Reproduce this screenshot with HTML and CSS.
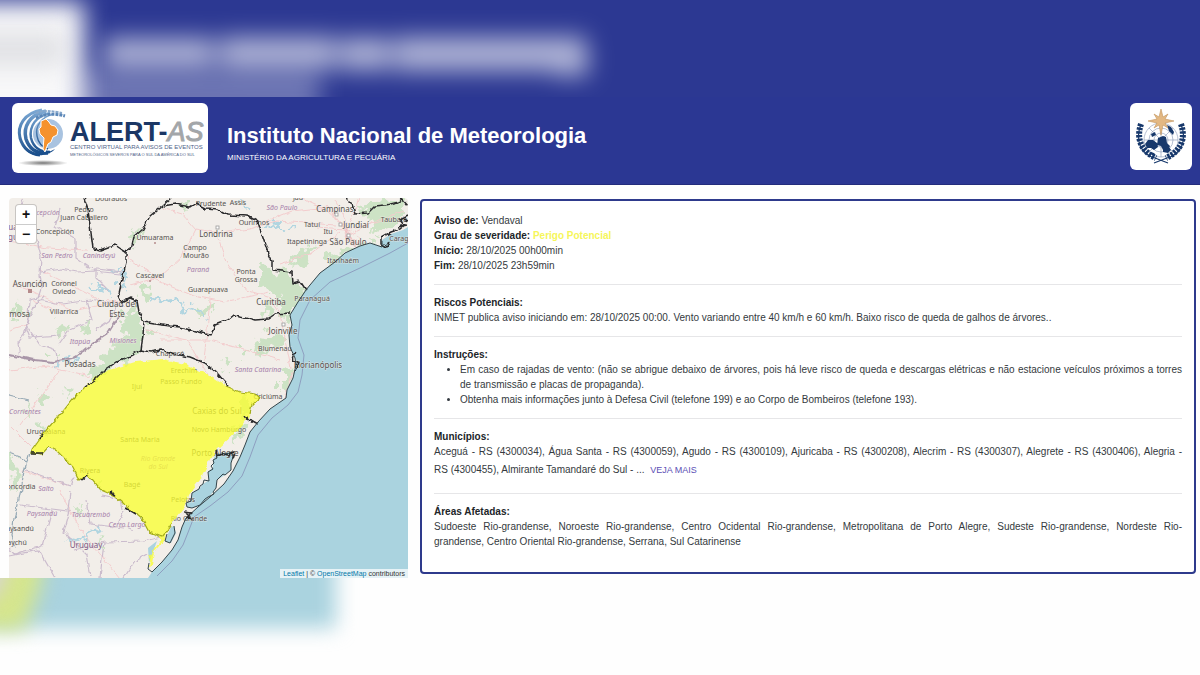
FILE: index.html
```html
<!DOCTYPE html>
<html lang="pt-BR">
<head>
<meta charset="utf-8">
<meta name="viewport" content="width=device-width, initial-scale=1">
<title>Alert-AS - Instituto Nacional de Meteorologia</title>
<link rel="stylesheet" href="styles.css">
</head>
<body>
<svg class="haze haze-top" viewBox="0 0 1200 97" preserveAspectRatio="xMinYMin slice" aria-hidden="true">
  <defs>
    <filter id="soft" x="-50%" y="-150%" width="200%" height="400%" color-interpolation-filters="sRGB"><feGaussianBlur stdDeviation="12"/></filter>
  </defs>
  <rect x="70" y="70" width="250" height="60" fill="#fff" opacity=".3" filter="url(#soft)"/>
  <g fill="#fff" opacity=".62" filter="url(#soft)">
    <rect x="104" y="38" width="110" height="30"/>
    <rect x="220" y="37" width="116" height="32"/>
    <rect x="340" y="38" width="50" height="32"/>
    <rect x="394" y="37" width="192" height="34"/>
    <rect x="554" y="50" width="34" height="26"/>
  </g>
  <rect x="-60" y="2" width="144" height="160" fill="#f8f8f9" filter="url(#soft)"/>
  <rect x="-40" y="32" width="105" height="34" fill="#c9cbd1" opacity=".5" filter="url(#soft)"/>
</svg>

<header class="header">
  <div class="logo logo-alert">
    <svg viewBox="12 103 196 70" role="img" aria-label="Alert-AS">
      <defs>
        <radialGradient id="shade"><stop offset="0" stop-color="#777"/><stop offset="1" stop-color="#fff"/></radialGradient>
        <linearGradient id="swirl" x1="0" y1="0" x2="0" y2="1"><stop offset="0" stop-color="#7ba8d4"/><stop offset="1" stop-color="#1b4f8c"/></linearGradient>
      </defs>
      <ellipse cx="43" cy="163" rx="25" ry="3" fill="url(#shade)"/>
      <circle cx="48" cy="134" r="15" fill="#a9c3e0"/>
      <g fill="none" stroke="url(#swirl)">
        <path d="M42 110c-18 3-25 16-22 28 3 10 10 16 20 17" stroke-width="3"/>
        <path d="M46 111c-17 4-23 16-20 28 3 9 10 15 22 14" stroke-width="3.500"/>
        <path d="M50 113c-14 3-21 13-19 25 2 8 8 14 19 14" stroke-width="2.500"/>
        <path d="M54 114c-13 3-19 12-17 22 1 6 5 11 11 13" stroke-width="1.500"/>
      </g>
      <path d="M24 148c7 8 18 8 31 1-5 6-22 11-31-1z" fill="#1b4f8c"/>
      <path d="M36 113c8-3 16-2 26 0" fill="none" stroke="#86a7cb" stroke-width="2" stroke-dasharray="3 1"/>
      <path d="M36 118c8-4 18-5 29-2" fill="none" stroke="#5b87b8" stroke-width="3" stroke-dasharray="3 1"/>
      <path d="M41 121l5-2 3 3 2 3 4 1 3 4-1 5-4 2-2 5-3 2-2 5-1 3-2-3 1-11-4-4-1-5 2-2z" fill="#f5922d" stroke="#fff" stroke-width="1"/>
      <text x="70" y="141" class="logo-name">ALERT-<tspan class="logo-suffix">AS</tspan></text>
      <text x="70" y="149" class="logo-line logo-line-a">CENTRO VIRTUAL PARA AVISOS DE EVENTOS</text>
      <text x="70" y="156" class="logo-line logo-line-b">METEOROLÓGICOS SEVEROS PARA O SUL DA AMÉRICA DO SUL</text>
    </svg>
  </div>
  <div class="titles">
    <h1>Instituto Nacional de Meteorologia</h1>
    <p>MINISTÉRIO DA AGRICULTURA E PECUÁRIA</p>
  </div>
  <div class="logo logo-wmo">
    <svg viewBox="1130 103 62 67" role="img" aria-label="Organização Meteorológica Mundial">
      <g fill="none" stroke="#8496b3" stroke-width=".6">
        <circle cx="1161" cy="140" r="17"/><circle cx="1161" cy="140" r="12"/><circle cx="1161" cy="140" r="7"/>
        <path d="M1144 140h34M1161 123v34M1149 128l24 24M1173 128l-24 24"/>
      </g>
      <g fill="#17386b">
        <path d="M1145 144l3-4 5 0 4 3 1 4-4 3-3-2-4 0zM1158 138l5-2 3 1 1 6 3 3-2 5-5-1-2-4-4-1zM1163 149l6-2 2 3-3 3-5-1zM1167 125l4 2 3 5-1 3-4-4zM1151 134l4-2 1 3-4 2zM1150 152l4 1 1 2-3 0z"/>
      </g>
      <g fill="none" stroke="#17386b" stroke-width="1.200">
        <path d="M1141 124c-6 16-1 30 14 34l13 5M1181 124c6 16 1 30-14 34l-13 5"/>
      </g>
      <g fill="none" stroke="#17386b" stroke-width="6" stroke-dasharray="2.500 1.200">
        <path d="M1141 124c-5 15 0 27 15 34M1181 124c5 15 0 27-15 34"/>
      </g>
      <path d="M1161 109l2 8 5-3-3 5 9 2-9 2 3 5-5-3-2 10-2-10-5 3 3-5-9-2 9-2-3-5 5 3z" fill="#e3b883" stroke="#c1935c" stroke-width=".6"/>
    </svg>
  </div>
</header>

<main class="content">
  <section class="map" aria-label="Mapa da área do aviso">
    <svg class="map-tiles" viewBox="9 198 399 380" preserveAspectRatio="xMidYMid slice" aria-hidden="true">
      <defs>
        <filter id="jag" x="-5%" y="-5%" width="110%" height="110%" color-interpolation-filters="sRGB"><feTurbulence type="fractalNoise" baseFrequency=".15" numOctaves="2" seed="4"/><feDisplacementMap in="SourceGraphic" scale="5" xChannelSelector="R" yChannelSelector="G"/></filter>
        <filter id="blot" x="-20%" y="-20%" width="140%" height="140%" color-interpolation-filters="sRGB"><feTurbulence type="fractalNoise" baseFrequency=".1" numOctaves="3" seed="9"/><feDisplacementMap in="SourceGraphic" scale="24" xChannelSelector="R" yChannelSelector="G"/><feGaussianBlur stdDeviation=".6"/></filter>
      </defs>
      <rect x="9" y="198" width="399" height="380" fill="#f2eee9"/>
      <g fill="#c0dfb8" opacity=".75" filter="url(#blot)">
        <path d="M120 312l14-4 10 14 0 30-30 14-22 16-4-8 18-22 18-18z"/>
        <path d="M262 268l22 2 10 12 12 10-14 22-4 10-10-26-16-10z"/>
        <path d="M286 262l22-16 10 2-18 16zM330 256l38-16 12 2-26 10-26 16z"/>
        <path d="M356 206l20-2 26-4 4 12-20 16-14 6 2-10z"/>
        <path d="M140 292l8-6 2 14-8 6zM262 336l14-8 8 12-10 8-16 6zM282 370l12-2-2 18-10 6z"/>
        <path d="M56 326l10-4 2 10-10 5zM84 325l6-2 0 8-7 2zM46 352l10-1-2 5-8 0zM11 300l12 2 8 14-18 4zM9 455l8 2 1 30-8 6z"/>
        <path d="M128 236l8-10 4 4-7 16zM40 390l8 5-3 10-8-4zM66 385l8 4-5 8zM243 398l10 5-6 16-5-5zM232 432l8-8 2 6-6 12z"/>
        <path d="M184 200l8 0-2 6-8 2zM208 302l3 8-10 10-6-6zM76 506l6 4-4 8zM98 536l6 2-2 8zM150 330l7 2-4 5zM240 350l16 0-12 7zM220 360l16 4-12 5z"/>
        <path d="M25 405l6 3-4 9zM44 424l4 1-4 14-4-3zM96 480l9 5-3 6zM268 300l8 2-4 18-6-4z"/>
      </g>
      <g fill="none" stroke="#b1d5e0" stroke-width="3" filter="url(#blot)">
        <path d="M88 287l16 2 6 5M55 365l24-6M66 541l20-5 16-8M150 297l20 4 24 8 14 10M266 224l26 5M236 200l14 10M110 270l14-4M126 270l-4 14"/>
      </g>
      <g fill="none" stroke="#f3cccd" stroke-width="1" filter="url(#jag)">
        <path d="M9 240l38 8 40 2M40 270l60 30 20 2M14 285l18 6 40 20 50-10M130 285l30-8 22-20 14-28 24 4 30-4 26-8 60 4M150 278l44 18 30 6 45-10M196 230l-14-16-20-6M216 232l10 30 20 28 26 8M262 223l30-12 36-4 14 20 10 12M300 198l26 12 22 20M335 200l12 24 0 16M316 228l30 2 50-12M270 300l10 14 6 30 5 24M146 330l40 10 26 40M160 340l50 0 70 20M9 370l40-4 40 10M60 370l-40 55M9 425l22 22 M20 470l50 16M60 490l20 40 40 48M210 300l-6 60M326 205l24 30 26-14 28-10M340 232l-30 22-30 10M262 430l20-25 12-35M360 198l-14 32M52 310l-20-10M126 256l28 20 8 2M9 330l20-6"/>
      </g>
      <path d="M340 234l8-4 6 4 5 6-8 4-8-2z" fill="#eeb9bb" opacity=".6" filter="url(#blot)"/>
      <g fill="none" stroke="#cbbccd" stroke-width="1.200" filter="url(#jag)">
        <path d="M22 198l5 20 10 22 4 16-1 20 2 10-4 12-9 2-1 20-4 15-6 8 2 16M41 272l20-3 16 3 18-1 26 3M60 208l-5 18 20 12 0 20 14 10 34 4M38 300l24 4 28-4 36 6M60 335l-30 2-4-10 8-20 10-10M96 268l0 10 12 12M26 325l14 20 16 6 2 14M86 300l6 20-24 10-10 14M96 330l14-10 6-14"/>
        <path d="M9 355l25 5 20 2 18-4 12-7 12-10 12-8 10-16" stroke="#a996a8" stroke-width="2"/>
        <path d="M9 395l20 5M9 452l10 4 8 8M30 452l-6 20-2 12-4 20-4 14-2 18 4 12" stroke="#96a9b5"/>
        <path d="M26 470l44 16 4-10M20 505l32 4 16 2 2-20M70 510l-6 22 22 22 4 24M52 510l-10 36-28 8-5-6M86 500l4 24 34 4M74 550l30-8 40-1 18-4M104 542l-4 36M124 510l-6 14 16 6M9 556l30-6 16 28M124 578l10-16 14-8M102 495l18 4 2 10"/>
      </g>

      <path d="M408 227L403 230 391 234 382 240 382 247 370 243 360 246 345 253 335 262 320 273 310 285 306 290 298 302 290 315 292 325 289 335 290 347 295 358 296 365 293 378 287 390 286 398 270 409 258 422 250 432 245 445 240 457 233 471 224 484 210 497 198 507 186 518 182 527 178 540 172 550 162 562 152 572 148 578 408 578Z" fill="#aad3df"/>
      <path d="M408 243L390 253 360 268 330 282 310 300 300 320 298 338 304 355 302 375 298 392 288 405 272 418 258 435 250 457 242 476 228 492 210 506 194 517 189 530 183 545 172 561 157 576" fill="none" stroke="#8e9fc0" stroke-width="1"/>
      <path id="lagoon" d="M215 455L222 453 232 452 233 457 231 463 231 470 225 475 217 480 216 488 213 492 208 498 200 505 192 508 187 507 186 503 192 500 192 493 199 489 203 484 209 480 208 472 213 467 213 461Z" fill="#aad3df"/>
      <path d="M165 541l6-14 3-1 2 7-5 10-5-1zM148 548l9-7-8 22z" fill="#aad3df"/>

      <g class="places">
        <text x="111" y="201">Dourados</text><text x="84" y="212">Pedro</text><text x="84" y="220">Juan Caballero</text><text x="55" y="234">Concepción</text>
        <text x="155" y="240">Umuarama</text><text x="195" y="250">Campo</text><text x="196" y="258">Mourão</text><text x="150" y="278">Cascavel</text>
        <text x="64" y="286">Coronel</text><text x="64" y="294">Oviedo</text><text x="64" y="314">Villarrica</text><text x="208" y="292">Guarapuava</text>
        <text x="211" y="206">Prudente</text><text x="238" y="205">Assis</text><text x="254" y="225">Ourinhos</text><text x="246" y="274">Ponta</text><text x="246" y="282">Grossa</text>
        <text x="312" y="227">Tatuí</text><text x="328" y="234">Itu</text><text x="307" y="244">Itapetininga</text><text x="343" y="263">Itanhaém</text><text x="394" y="222">Taubaté</text><text x="403" y="241">Caraguá</text>
        <text x="312" y="301">Paranaguá</text><text x="275" y="351">Blumenau</text><text x="268" y="399">Criciúma</text><text x="21" y="489">oncordia</text>
        <text x="20" y="531">aysandú</text><text x="17" y="545">aychú</text><text x="189" y="521">Rio Grande</text><text x="298" y="200">Jaú</text><text x="184" y="373">Erechim</text><text x="181" y="384">Passo Fundo</text><text x="137" y="389">Ijuí</text><text x="170" y="356">Chapecó</text>
        <text x="46" y="434">Uruguaiana</text><text x="140" y="442">Santa Maria</text><text x="132" y="487">Bagé</text><text x="183" y="502">Pelotas</text><text x="219" y="432">Novo Hamburgo</text><text x="90" y="473">Rivera</text>
      </g>
      <g class="places places-big">
        <text x="30" y="287">Asunción</text><text x="117" y="307">Ciudad del</text><text x="117" y="317">Este</text><text x="80" y="367">Posadas</text><text x="18" y="317">rmosa</text><text x="216" y="237">Londrina</text>
        <text x="335" y="212">Campinas</text><text x="356" y="228">Jundiaí</text><text x="348" y="245">São Paulo</text><text x="271" y="305">Curitiba</text><text x="283" y="334">Joinville</text><text x="318" y="368">Florianópolis</text>
        <text x="217" y="414">Caxias do Sul</text><text x="215" y="456">Porto Alegre</text>
      </g>
      <g class="places regions">
        <text x="42" y="215">Concepción</text><text x="57" y="258">San Pedro</text><text x="99" y="258">Canindeyú</text><text x="198" y="272">Paraná</text><text x="80" y="344">Itapúa</text><text x="123" y="343">Misiones</text>
        <text x="282" y="210">São Paulo</text><text x="258" y="372">Santa Catarina</text><text x="25" y="414">Corrientes</text><text x="46" y="491">Salto</text><text x="42" y="516">Paysandú</text><text x="91" y="517">Tacuarembó</text><text x="127" y="527">Cerro Largo</text>
        <text x="158" y="461">Rio Grande</text><text x="158" y="469">do Sul</text>
      </g>
      <g class="places country"><text x="86" y="548">Uruguay</text><text x="13" y="230">ua</text><text x="13" y="240">gu</text></g>
      <g fill="#b58b8b"><rect x="28" y="289" width="4" height="4"/><circle cx="155" cy="243" r="1"/><circle cx="150" cy="281" r="1"/></g>
      <g fill="#fff" stroke="#999" stroke-width=".8"><rect x="216" y="226" width="3" height="3"/><rect x="335" y="213" width="3" height="3"/><rect x="339" y="223" width="3" height="3"/><rect x="347" y="234" width="3" height="3"/><rect x="282" y="323" width="3" height="3"/></g>

      <g filter="url(#jag)">
        <path d="M85 387L92 380 106 371 135 362 163 359 185 364 205 373 226 386 240 392 256 394 260 398 252 405 250 414 246 420 239 429 215 452 209 463 200 480 188 495 184 508 173 522 167 531 164 540 154 552 152 564 149 567 150 556 160 541 160 536 149 532 142 519 130 509 115 496 101 490 88 474 79 480 73 467 58 452 48 447 42 454 30 452 40 438 48 428 60 415 72 400Z" fill="#faff2e" fill-opacity=".76"/>
        <path d="M226 386L240 392 256 394 260 398 252 405 250 414M173 522L167 531 162 537 149 532 142 519 130 509 115 496 101 490 88 474 79 480 73 467 58 452 48 447 42 454 30 452 40 438 48 428 60 415 72 400 85 387" fill="none" stroke="#a4ad1a" stroke-width="1.200"/>
      </g>
      <g class="borders" filter="url(#jag)">
        <path d="M84 198L88 210 90 225 93 248 100 250 108 247 115 245 121 249 126 252 126 262 122 280 118 298 122 302 130 298 137 301 139 312 144 322 143 335 141 350"/>
        <path d="M171 198L163 205 150 216 143 229 134 237 131 249 126 252M163 206L175 204 190 207 196 203 206 208 218 209 228 215 248 216 258 222 262 235 268 253 272 261 272 270 292 272 293 283 300 281 306 290"/>
        <path d="M144 322L155 324 170 326 180 327 195 331 205 334 211 335 215 325 228 320 234 315 245 317 255 320 268 319 275 314 290 313"/>
        <path d="M346 198L352 204 355 214 368 213 375 206 385 205 398 202 402 199 408 206"/>
        <path d="M85 387L95 380 105 370 115 363 130 356 141 350 150 352 162 350 175 354 190 357 205 363 218 374 228 386"/>
        <path d="M408 215l-8 4 5 6-5 4-9 3-9 5v7l5 3 2-5M408 221l-4-2M398 227l9-2M295 352l-3 8 6 2-3 8M246 419l5 1 7 4M245 416l4 5M81 480l7-6M110 492l5 3M126 508l10 6M31 453h12M40 439l4-5"/>
      </g>
      <g class="borders borders-coast">
        <path d="M382 241L382 247 370 243 360 246 345 253 335 262 320 273 310 285 306 290 298 302 290 315 292 325 289 335 290 347 295 358 296 365 293 378 287 390 286 398 270 409 258 422 250 432 245 445 240 457 233 471 224 484 210 497 198 507 186 518 182 527 178 540 172 550 162 562 152 572 148 569 149 563"/>
        <path d="M216 455L222 454 232 453 233 457 231 463 231 470 225 475 223 474 217 480 216 488 213 492 214 494 208 497 205 499 200 505 192 508 187 507 186 503 191 501 192 493 199 489 200 486 203 484 204 480 209 481 208 472 213 469 211 466 214 463 213 460 217 458"/>
        <path d="M174 526L175 533 170 543 165 541M165 541L167 534"/>
      </g>
      <g class="borders" filter="url(#jag)">
        <path d="M184 512l8 1-5 4 5 2-6-6M216 451l1 5 6-2 5 3 1-4 6-1-2 6 1-3"/>
      </g>
    </svg>
    <div class="zoom-control">
      <button type="button" aria-label="Aproximar">+</button>
      <button type="button" aria-label="Afastar">−</button>
    </div>
    <div class="attribution"><a href="#">Leaflet</a> | © <a href="#">OpenStreetMap</a> contributors</div>
  </section>

  <article class="panel">
    <section>
      <p><strong>Aviso de:</strong> Vendaval</p>
      <p><strong>Grau de severidade:</strong> <strong class="severity">Perigo Potencial</strong></p>
      <p><strong>Início:</strong> 28/10/2025 00h00min</p>
      <p><strong>Fim:</strong> 28/10/2025 23h59min</p>
    </section>
    <hr>
    <section>
      <h2>Riscos Potenciais:</h2>
      <p>INMET publica aviso iniciando em: 28/10/2025 00:00. Vento variando entre 40 km/h e 60 km/h. Baixo risco de queda de galhos de árvores..</p>
    </section>
    <hr>
    <section>
      <h2>Instruções:</h2>
      <ul>
        <li>Em caso de rajadas de vento: (não se abrigue debaixo de árvores, pois há leve risco de queda e descargas elétricas e não estacione veículos próximos a torres de transmissão e placas de propaganda).</li>
        <li>Obtenha mais informações junto à Defesa Civil (telefone 199) e ao Corpo de Bombeiros (telefone 193).</li>
      </ul>
    </section>
    <hr>
    <section>
      <h2>Municípios:</h2>
      <p>Aceguá - RS (4300034), Água Santa - RS (4300059), Agudo - RS (4300109), Ajuricaba - RS (4300208), Alecrim - RS (4300307), Alegrete - RS (4300406), Alegria - RS&nbsp;(4300455), Almirante Tamandaré do Sul - ... <button type="button" class="more">VEJA MAIS</button></p>
    </section>
    <hr>
    <section>
      <h2>Áreas Afetadas:</h2>
      <p>Sudoeste Rio-grandense, Noroeste Rio-grandense, Centro Ocidental Rio-grandense, Metropolitana de Porto Alegre, Sudeste Rio-grandense, Nordeste Rio-grandense,&nbsp;Centro Oriental Rio-grandense, Serrana, Sul Catarinense</p>
    </section>
  </article>
</main>

<svg class="haze haze-bottom" viewBox="0 0 1200 97" preserveAspectRatio="xMinYMin slice" aria-hidden="true">
  <defs><filter id="softer" x="-50%" y="-60%" width="200%" height="220%" color-interpolation-filters="sRGB"><feGaussianBlur stdDeviation="10"/></filter></defs>
  <rect x="-60" y="-60" width="396" height="110" fill="#aad3df" filter="url(#softer)"/>
  <path d="M-40-60H50L40 10 24 52H-40z" fill="#d6e68c" filter="url(#softer)"/>
  <path d="M-40-60H16L2 10-20 30z" fill="#d8d4d8" filter="url(#softer)"/>
</svg>
</body>
</html>
```
FILE: styles.css
```css
* {
  box-sizing: border-box;
}

body {
  margin: 0;
  min-height: 100vh;
  background: #fefefe;
  color: #343a40;
  font-family: "Liberation Sans", Arial, sans-serif;
  font-size: 10px;
  line-height: 15px;
  overflow-x: hidden;
}

h1, h2, p, ul {
  margin: 0;
}

.haze {
  display: block;
  width: 100%;
  height: 97px;
}

.haze-top {
  background: #2c3892;
}

.header {
  display: flex;
  align-items: flex-start;
  gap: 19px;
  padding: 6px 8px 11px 12px;
  background: #2b3793;
  border-bottom: 1px solid #232c7c;
  color: #fff;
}

.logo {
  flex: none;
  background: #fff;
  border-radius: 6px;
}

.logo svg {
  display: block;
  width: 100%;
}

.logo-alert {
  width: 196px;
}

.logo-wmo {
  width: 62px;
  margin-left: auto;
}

.logo-name {
  font-size: 27px;
  font-weight: bold;
  fill: #1b3765;
}

.logo-suffix {
  font-style: italic;
  font-weight: normal;
  fill: #a3a6a9;
  stroke: #a3a6a9;
}

.logo-line {
  fill: #4f6288;
}

.logo-line-a {
  font-size: 6px;
}

.logo-line-b {
  font-size: 4px;
}

.titles {
  padding-top: 19px;
}

.titles h1 {
  font-size: 22px;
  line-height: 28px;
}

.titles p {
  padding-top: 1px;
  font-size: 8px;
  line-height: 14px;
}

.content {
  display: grid;
  grid-template-columns: 399fr 776fr;
  gap: 12px;
  align-items: start;
  padding: 13px 4px 0 9px;
}

.map {
  position: relative;
  overflow: hidden;
  border-radius: 4px 4px 0 0;
}

.map-tiles {
  display: block;
  width: 100%;
  min-height: 380px;
}

.places {
  font-family: "Noto Sans", sans-serif;
  font-size: 7px;
  fill: #55524f;
  text-anchor: middle;
  stroke: #f2eee9;
  stroke-width: 1px;
  stroke-opacity: 0.6;
  paint-order: stroke;
}

.places-big {
  font-size: 8px;
}

.regions {
  font-style: italic;
  fill: #a67fa9;
}

.country {
  font-size: 8px;
  fill: #7d5784;
}

.borders path {
  fill: none;
  stroke: #2a2a2c;
  stroke-width: 1.5px;
  stroke-linejoin: round;
}

.borders-coast path {
  stroke: #34454b;
  stroke-width: 1px;
}

.zoom-control {
  position: absolute;
  top: 7px;
  left: 7px;
  width: 20px;
  border-radius: 3px;
  background: #fff;
  box-shadow: 0 0 0 1px #c8c5c2;
}

.zoom-control button {
  display: block;
  width: 100%;
  height: 19px;
  padding: 0;
  border: 0;
  background: none;
  color: #111;
  font: bold 14px/19px "Liberation Sans", Arial, sans-serif;
}

.zoom-control button + button {
  border-top: 1px solid #ccc;
}

.attribution {
  position: absolute;
  right: 0;
  bottom: 0;
  padding: 0 3px;
  background: rgba(255, 255, 255, 0.7);
  color: #333;
  font-size: 7px;
  line-height: 9px;
}

.attribution a {
  color: #0078a8;
  text-decoration: none;
}

.panel {
  margin-top: 1px;
  padding: 12px 12px 23px;
  border: 2px solid #2e3a8c;
  border-radius: 4px;
  background: #fff;
  text-align: justify;
}

.panel h2 {
  font-size: 10px;
  line-height: 15px;
}

.panel h2, .panel strong {
  color: #212529;
}

.panel .severity {
  color: #f6f65a;
}

.panel hr {
  margin: 11px 0 10px;
  border: 0;
  border-top: 1px solid #e6e6e8;
}

.panel ul {
  padding-left: 26px;
}

.more {
  height: 23px;
  padding: 0 3px;
  border: 0;
  background: none;
  color: #5b4fb5;
  font: 9px/23px "Liberation Sans", Arial, sans-serif;
}
```
